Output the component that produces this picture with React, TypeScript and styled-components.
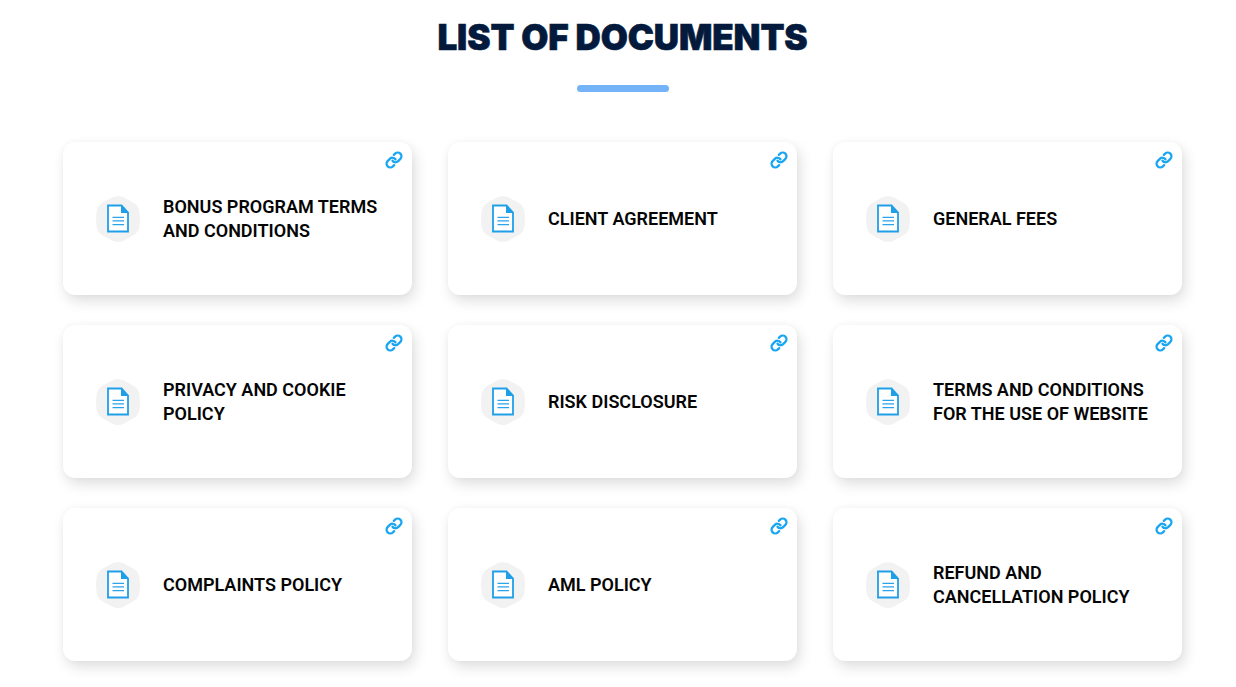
import React from "react";
import styled, { createGlobalStyle } from "styled-components";

const Global = createGlobalStyle`
  html, body { margin: 0; padding: 0; background: #fff; }
  body { overflow: hidden; }
`;

const Page = styled.main`
  width: 1236px;
  height: 687px;
  box-sizing: border-box;
  padding: 17px 54px 0 63px;
  overflow: hidden;
`;

const Title = styled.h1`
  margin: 0;
  text-align: center;
  font-family: Inter, "Liberation Sans", sans-serif;
  font-weight: 900;
  font-size: 35px;
  line-height: 40px;
  color: #031a3d;
  -webkit-text-stroke: 0.6px #031a3d;
  letter-spacing: -0.1px;
`;

const Rule = styled.div`
  width: 92px;
  height: 7px;
  margin: 28px auto 50px;
  border-radius: 4px;
  background: #74b3f7;
`;

const Grid = styled.div`
  display: grid;
  grid-template-columns: repeat(3, 349px);
  grid-auto-rows: 153px;
  column-gap: 36px;
  row-gap: 30px;
`;

const Card = styled.a`
  position: relative;
  display: flex;
  align-items: center;
  gap: 23px;
  padding: 0 20px 0 33px;
  background: #fff;
  border-radius: 12px;
  box-shadow: 3px 6px 14px rgba(0, 0, 0, 0.13), 0 0 6px rgba(0, 0, 0, 0.03);
`;

const Badge = styled.span`
  flex: none;
  width: 44px;
  height: 46px;
  display: block;
`;

const Label = styled.span`
  font-family: Roboto, "Liberation Sans", sans-serif;
  font-weight: 600;
  font-size: 18px;
  line-height: 24px;
  color: #050505;
`;

const LinkMark = styled.span`
  position: absolute;
  top: 9px;
  right: 9px;
  width: 18px;
  height: 18px;
  display: block;
`;

const DocBadge = () => (
  <Badge>
    <svg width="44" height="46" viewBox="0 0 44 46" fill="none">
      <path
        d="M16 1.5 C20 -0.5 24 -0.5 28 1.5 L37 6.5 C41 8.8 43 11.5 43.5 16 L44 23 L43.5 30 C43 34.5 41 37.2 37 39.5 L28 44.5 C24 46.5 20 46.5 16 44.5 L7 39.5 C3 37.2 1 34.5 0.5 30 L0 23 L0.5 16 C1 11.5 3 8.8 7 6.5 Z"
        fill="#f2f2f2"
      />
      <path d="M12 9.5 H25.5 L32 16.5 V35.5 H12 Z" fill="#fff" stroke="#1e9fe8" strokeWidth="1.8" />
      <path d="M25 8.8 L32.8 17 H25 Z" fill="#1e9fe8" />
      <path d="M16.5 21.4 H28 M16.5 24.9 H28 M16.5 28.6 H28" stroke="#2ba3ea" strokeWidth="1.4" />
    </svg>
  </Badge>
);

const ChainIcon = () => (
  <LinkMark>
    <svg width="18" height="18" viewBox="0 0 24 24" fill="none" stroke="#18a5f2" strokeWidth="3" strokeLinecap="round" strokeLinejoin="round">
      <path d="M10 13a5 5 0 0 0 7.54.54l3-3a5 5 0 0 0-7.07-7.07l-1.72 1.71" />
      <path d="M14 11a5 5 0 0 0-7.54-.54l-3 3a5 5 0 0 0 7.07 7.07l1.71-1.71" />
    </svg>
  </LinkMark>
);

const documents = [
  "BONUS PROGRAM TERMS AND CONDITIONS",
  "CLIENT AGREEMENT",
  "GENERAL FEES",
  "PRIVACY AND COOKIE POLICY",
  "RISK DISCLOSURE",
  "TERMS AND CONDITIONS FOR THE USE OF WEBSITE",
  "COMPLAINTS POLICY",
  "AML POLICY",
  "REFUND AND CANCELLATION POLICY",
];

export default function App() {
  return (
    <Page>
      <Global />
      <Title>LIST OF DOCUMENTS</Title>
      <Rule />
      <Grid>
        {documents.map((d) => (
          <Card key={d}>
            <ChainIcon />
            <DocBadge />
            <Label>{d}</Label>
          </Card>
        ))}
      </Grid>
    </Page>
  );
}
